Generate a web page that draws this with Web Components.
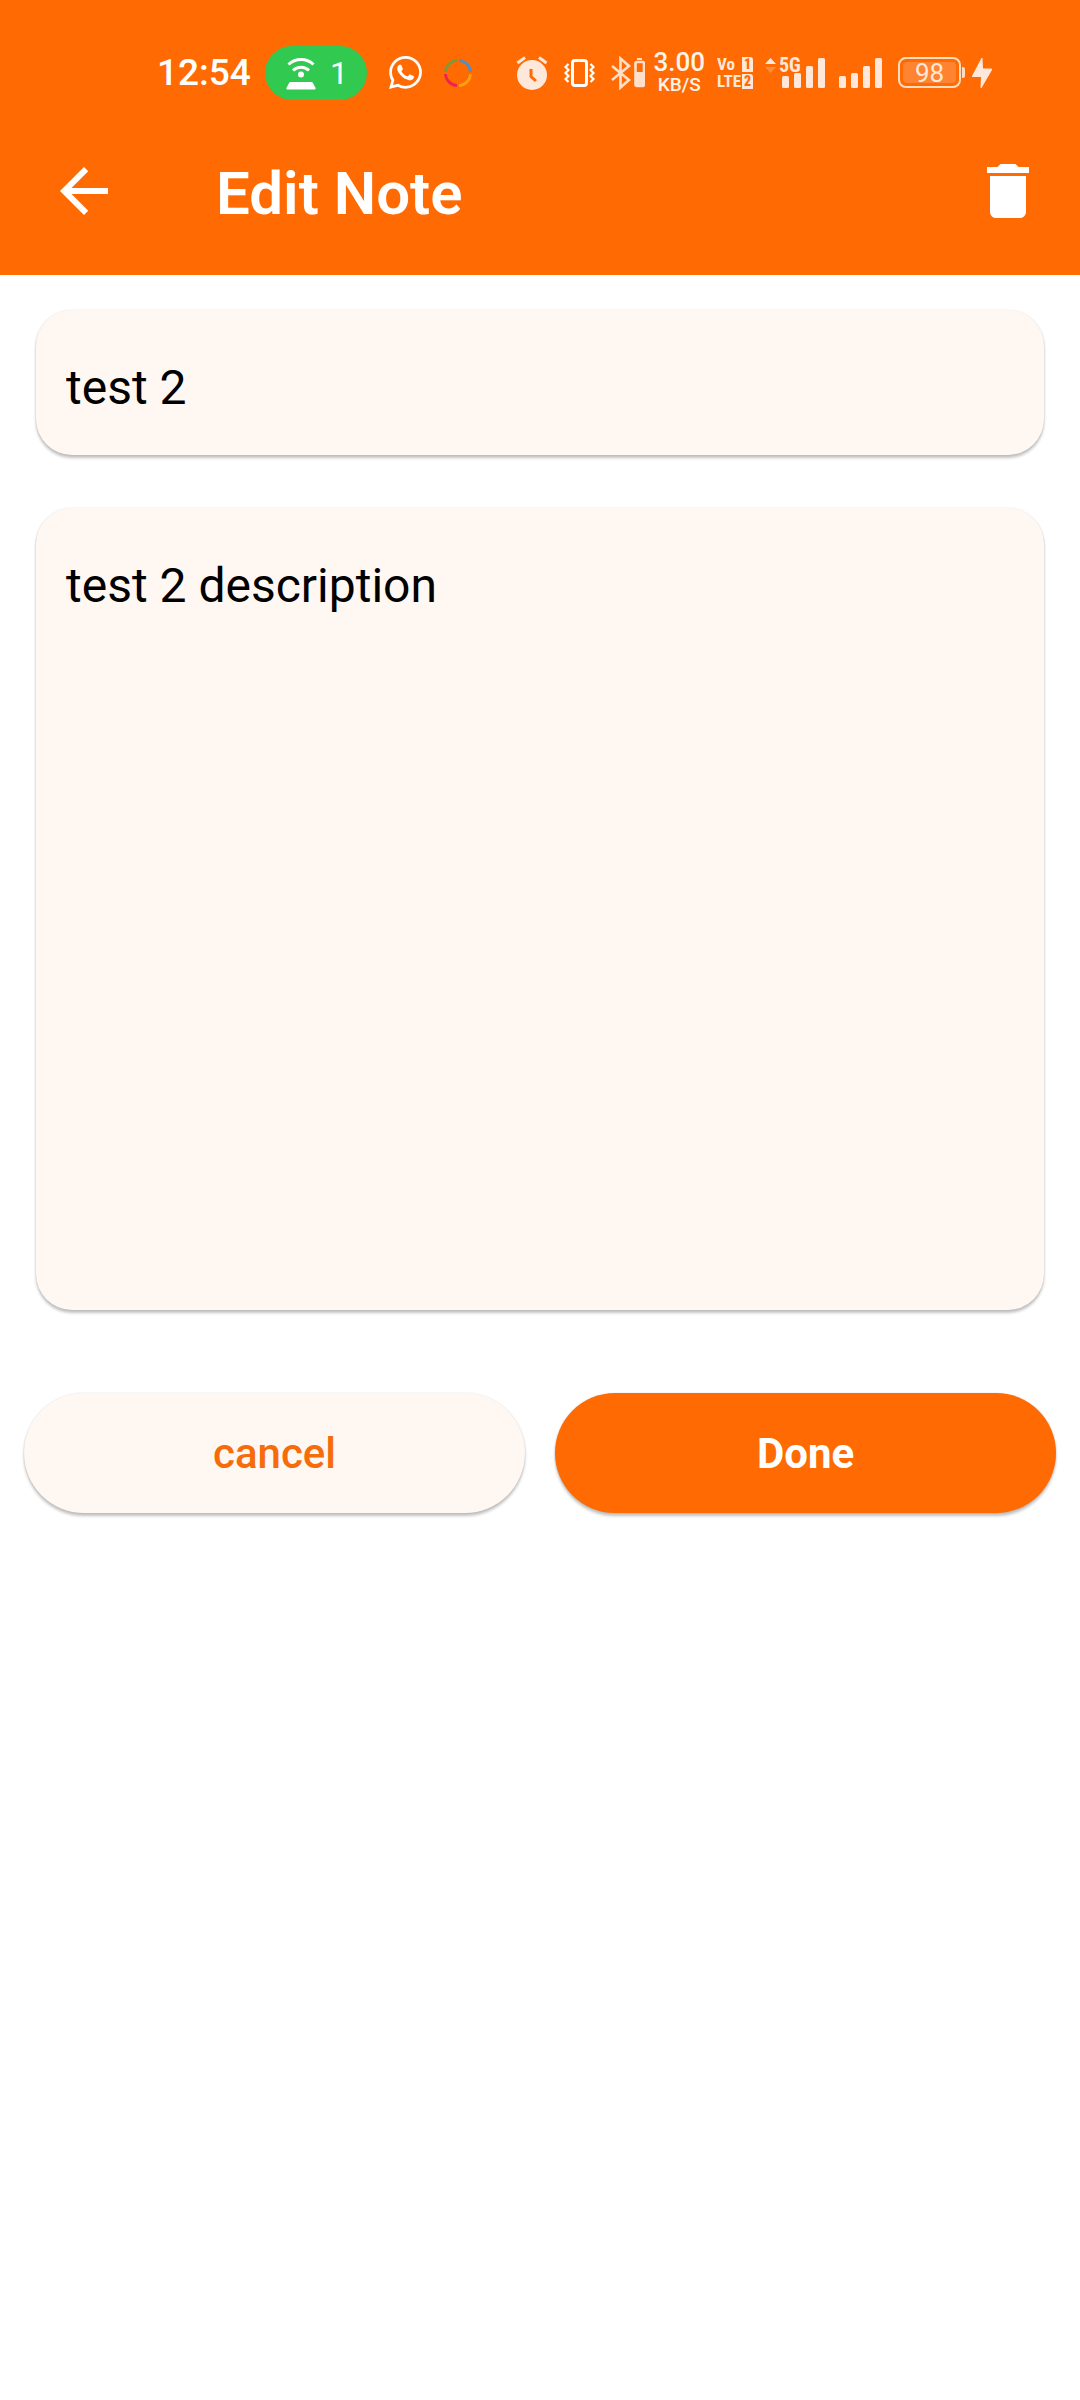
<!DOCTYPE html>
<html lang="en">
<head>
<meta charset="utf-8">
<meta name="viewport" content="width=device-width, initial-scale=1">
<title>Edit Note</title>
<style>
  :root {
    --brand: #ff6a03;
    --surface: #fff7f2;
    --status: #ffe8d9;
    --shadow: 0 3px 3px rgba(0,0,0,.24), 0 0 2px rgba(0,0,0,.12);
  }
  body { margin: 0; background: #fff; font-family: Roboto, "Liberation Sans", sans-serif; }
</style>
</head>
<body>
<note-screen></note-screen>
<script>
const define = (name, html, setup) => customElements.define(name, class extends HTMLElement {
  constructor() {
    super();
    this.attachShadow({ mode: 'open' }).innerHTML = html;
  }
  connectedCallback() { if (setup) setup(this, this.shadowRoot); }
});

define('signal-bars', `
<style>
  :host { display: block; }
  svg { display: block; fill: var(--status); }
</style>
<svg width="43" height="30" viewBox="0 0 43 30" aria-hidden="true">
  <rect x="0" y="18" width="7" height="12" rx="1.5"/><rect x="12" y="15" width="7" height="15" rx="1.5"/>
  <rect x="24" y="8" width="7" height="22" rx="1.5"/><rect x="36" y="0" width="7" height="30" rx="1.5"/>
</svg>`);

define('hotspot-pill', `
<style>
  :host { display: flex; align-items: center; justify-content: space-between; box-sizing: border-box;
    width: 102px; height: 54px; padding: 0 19px 0 21px; border-radius: 27px; background: #31c950;
    color: #fff; font-size: 32px; line-height: 54px; }
  svg { display: block; }
</style>
<svg width="30" height="34" viewBox="0 0 30 34" fill="none" stroke="#fff" stroke-width="3" aria-hidden="true">
  <path d="M2.5 8.5a18 18 0 0 1 25 0M7 14.5a11.5 11.5 0 0 1 16 0"/>
  <circle cx="15" cy="18.500" r="3" fill="#fff" stroke="none"/>
  <path d="M4.500 26h21a1.500 1.500 0 0 1 1.400 1l2.700 5q.4 1.500-1 1.500H1.400q-1.400 0-1-1.500l2.700-5a1.500 1.500 0 0 1 1.400-1z" fill="#fff" stroke="none"/>
</svg>
<span><slot></slot></span>`);

define('net-speed', `
<style>
  :host { display: grid; justify-items: center; color: #fff4ea; font-weight: 500; }
  .n { font-size: 26px; line-height: 24px; }
  .u { font-size: 19px; line-height: 22px; }
</style>
<span class="n"><slot name="value"></slot></span><span class="u"><slot name="unit"></slot></span>`);

define('volte-badge', `
<style>
  :host { display: grid; grid-template-columns: auto 11px; gap: 2px 1px; color: var(--status);
    font: 700 17px/15px "Liberation Sans Narrow", "Roboto Condensed", Roboto, sans-serif; }
  b { background: var(--status); color: var(--brand); font-size: 14px; text-align: center;
    border-radius: 0 3px 0 0; }
</style>
<span>Vo</span><b>1</b><span>LTE</span><b>2</b>`);

define('mobile-signal', `
<style>
  :host { display: grid; grid-template-columns: 14px 3px 43px; margin-right: 2px; }
  svg { display: block; grid-area: 1 / 1; }
  signal-bars { grid-area: 1 / 3; align-self: end; }
  span { grid-area: 1 / 2 / 2 / 4; z-index: 1; width: 24px; height: 17px; color: var(--status);
    font: 700 20px/14px "Liberation Sans Narrow", "Roboto Condensed", Roboto, sans-serif; }
</style>
<svg width="11" height="15" viewBox="0 0 11 15" aria-hidden="true">
  <path d="M5.500 0 11 6H0z" fill="#ffe8d9"/><path d="M5.500 15 11 9H0z" fill="#ff8b3c"/>
</svg>
<signal-bars></signal-bars><span>5G</span>`);

define('battery-level', `
<style>
  :host { display: flex; align-items: center; gap: 1px; }
  .cell { box-sizing: border-box; width: 63px; height: 31px; border: 2px solid #ffdcc0; border-radius: 8px; padding: 3px; }
  .fill { height: 21px; border-radius: 4px; background: #ff8431; color: var(--status);
    font-size: 26px; line-height: 22px; text-align: center; }
  i { width: 3px; height: 11px; border-radius: 0 2px 2px 0; background: #ffdcc0; }
  svg { display: block; margin-left: 6px; }
</style>
<div class="cell"><div class="fill"><slot></slot></div></div><i></i>
<svg width="20" height="32" viewBox="0 0 20 32" fill="#ffe8d9" aria-hidden="true"><path d="M9.500 1 0 19q-.3 1 .8 1H9l-.5 11h1L20 13q.3-1.500-1-1.500h-8L10.500 1z"/></svg>`);

define('status-bar', `
<style>
  :host { display: flex; justify-content: space-between; align-items: center; box-sizing: border-box;
    height: 107px; padding: 38px 88px 0 157px; }
  .group { display: flex; align-items: center; }
  .left { gap: 22px; }
  .clock { gap: 14px; }
  .icons { gap: 16px; }
  .net { gap: 12px; margin-left: 8px; }
  battery-level { margin-left: 16px; }
  time { color: #fff; font-size: 37px; line-height: 54px; font-weight: 500; }
  svg { display: block; }
</style>
<div class="group left">
  <div class="group clock"><time>12:54</time><hotspot-pill>1</hotspot-pill></div>
  <svg width="33" height="33" viewBox="0 0 24 24" fill="#fff" aria-hidden="true"><path d="M17.472 14.382c-.297-.149-1.758-.867-2.030-.967-.273-.099-.471-.148-.67.150-.197.297-.767.966-.940 1.164-.173.199-.347.223-.644.075-.297-.150-1.255-.463-2.390-1.475-.883-.788-1.480-1.761-1.653-2.059-.173-.297-.018-.458.130-.606.134-.133.298-.347.446-.520.149-.174.198-.298.298-.497.099-.198.050-.371-.025-.520-.075-.149-.669-1.612-.916-2.207-.242-.579-.487-.500-.669-.510-.173-.008-.371-.010-.570-.010-.198 0-.520.074-.792.372-.272.297-1.040 1.016-1.040 2.479 0 1.462 1.065 2.875 1.213 3.074.149.198 2.096 3.200 5.077 4.487.709.306 1.262.489 1.694.625.712.227 1.360.195 1.871.118.571-.085 1.758-.719 2.006-1.413.248-.694.248-1.289.173-1.413-.074-.124-.272-.198-.570-.347m-5.421 7.403h-.004a9.870 9.870 0 0 1-5.031-1.378l-.361-.214-3.741.982.998-3.648-.235-.374a9.860 9.860 0 0 1-1.510-5.260c.001-5.450 4.436-9.884 9.888-9.884 2.640 0 5.122 1.030 6.988 2.898a9.825 9.825 0 0 1 2.893 6.994c-.003 5.450-4.437 9.884-9.885 9.884m8.413-18.297A11.815 11.815 0 0 0 12.050 0C5.495 0 .160 5.335.157 11.892c0 2.096.547 4.142 1.588 5.945L.057 24l6.305-1.654a11.882 11.882 0 0 0 5.683 1.448h.005c6.554 0 11.890-5.335 11.893-11.893a11.821 11.821 0 0 0-3.480-8.413z"/></svg>
  <svg width="28" height="28" viewBox="0 0 28 28" fill="none" stroke-width="2.800" aria-hidden="true">
    <path d="M1.400 13A12.600 12.600 0 0 1 13 1.400" stroke="#7d9a35"/>
    <path d="M15 1.400A12.600 12.600 0 0 1 26.600 13" stroke="#508fc4"/>
    <path d="M26.600 15A12.600 12.600 0 0 1 15 26.600" stroke="#ffa00f"/>
    <path d="M13 26.600A12.600 12.600 0 0 1 1.400 15" stroke="#ee2150"/>
  </svg>
</div>
<div class="group">
  <div class="group icons">
    <svg width="32" height="34" viewBox="0 0 32 34" aria-hidden="true">
      <circle cx="16" cy="19" r="15" fill="#ffe8d9"/>
      <path d="M1.500 7 9 1.500M30.500 7 23 1.500" stroke="#ffe8d9" stroke-width="3"/>
      <path d="M15 13v7.500l5 4.500" fill="none" stroke="#ff6a03" stroke-width="3"/>
    </svg>
    <svg width="31" height="28" viewBox="0 0 31 28" fill="none" stroke="#fff" aria-hidden="true">
      <rect x="8.500" y="1.500" width="14" height="25" rx="2.500" stroke-width="3"/>
      <path d="M4.500 5 1.500 8l3 3-3 3 3 3-3 3 3 3M26.500 5l3 3-3 3 3 3-3 3 3 3-3 3" stroke-width="2.200"/>
    </svg>
    <svg width="34" height="34" viewBox="0 0 34 34" fill="none" stroke="#ffe0ca" stroke-width="2.600" aria-hidden="true">
      <path d="M1 10l17 14-8.500 7.500V2.500L18 10 1 24"/>
      <rect x="24.500" y="6" width="8.500" height="24" rx="1.500"/>
      <path d="M26 3h5" stroke-width="2"/><path d="M24 16h9.500v13q0 1.500-1.500 1.500h-6.500q-1.500 0-1.500-1.500z" fill="#ffe0ca" stroke="none"/>
    </svg>
  </div>
  <div class="group net">
    <net-speed><span slot="value">3.00</span><span slot="unit">KB/S</span></net-speed>
    <volte-badge></volte-badge>
    <mobile-signal></mobile-signal>
    <signal-bars></signal-bars>
  </div>
  <battery-level>98</battery-level>
</div>`);

define('icon-button', `
<style>
  :host { display: block; }
  button { display: block; padding: 0; border: 0; background: none; color: inherit; cursor: pointer; }
  ::slotted(svg) { display: block; width: 72px; height: 72px; fill: currentColor; }
</style>
<button type="button"><slot></slot></button>`,
(el, root) => root.querySelector('button').setAttribute('aria-label', el.getAttribute('label')));

define('app-bar', `
<style>
  :host { display: flex; align-items: center; height: 168px; padding: 0 36px 0 48px; color: #fff; }
  h1 { flex: 1; margin: 0 0 0 96px; font-size: 60px; line-height: 72px; font-weight: 600; padding-top: 6px; }
</style>
<icon-button label="Back"><svg viewBox="0 0 24 24"><path d="M20 11H7.830l5.590-5.590L12 4l-8 8 8 8 1.410-1.410L7.830 13H20v-2z"/></svg></icon-button>
<h1><slot></slot></h1>
<icon-button label="Delete note"><svg viewBox="0 0 24 24"><path d="M6 19c0 1.100.9 2 2 2h8c1.100 0 2-.9 2-2V7H6v12zM19 4h-3.500l-1-1h-5l-1 1H5v2h14V4z"/></svg></icon-button>`);

const fieldStyle = `
<style>
  :host { display: block; }
  label { position: absolute; width: 1px; height: 1px; overflow: hidden; clip-path: inset(50%); }
  input, textarea { display: block; box-sizing: border-box; width: 100%; margin: 0; border: 0; outline: 0;
    padding: 41px 30px 31px; border-radius: 36px; background: var(--surface); box-shadow: var(--shadow);
    color: #000; font-family: inherit; font-size: 48px; line-height: 73px; resize: none; overflow: hidden; }
  input { height: 145px; }
</style>`;
const fill = (el, root) => {
  root.querySelector('label').setAttribute('aria-label', el.getAttribute('label'));
  const box = root.querySelector('#box');
  box.setAttribute('aria-label', el.getAttribute('label'));
  box.value = el.getAttribute('value');
};
define('note-title', fieldStyle + `<label for="box"></label><input id="box" type="text">`, fill);
define('note-body', fieldStyle + `<label for="box"></label><textarea id="box" rows="10"></textarea>`, fill);

define('pill-button', `
<style>
  :host { display: block; flex: 1; --bg: var(--surface); --fg: #f76c0a; --weight: 500; }
  :host([primary]) { --bg: var(--brand); --fg: #fff; --weight: 700; }
  button { display: block; width: 100%; height: 120px; padding: 2px 0 0; border: 0; border-radius: 60px; cursor: pointer;
    background: var(--bg); color: var(--fg); box-shadow: var(--shadow);
    font-family: inherit; font-size: 42px; line-height: 60px; font-weight: var(--weight); }
</style>
<button type="button"><slot></slot></button>`);

define('note-screen', `
<style>
  :host { display: block; }
  header { background: var(--brand); }
  main { padding: 35px 24px 48px; }
  .fields { display: grid; gap: 53px; padding: 0 12px; }
  .actions { display: flex; gap: 30px; margin-top: 83px; }
</style>
<header><status-bar></status-bar><app-bar>Edit Note</app-bar></header>
<main>
  <div class="fields">
    <note-title label="Title" value="test 2"></note-title>
    <note-body label="Description" value="test 2 description"></note-body>
  </div>
  <div class="actions"><pill-button>cancel</pill-button><pill-button primary>Done</pill-button></div>
</main>`);
</script>
</body>
</html>
